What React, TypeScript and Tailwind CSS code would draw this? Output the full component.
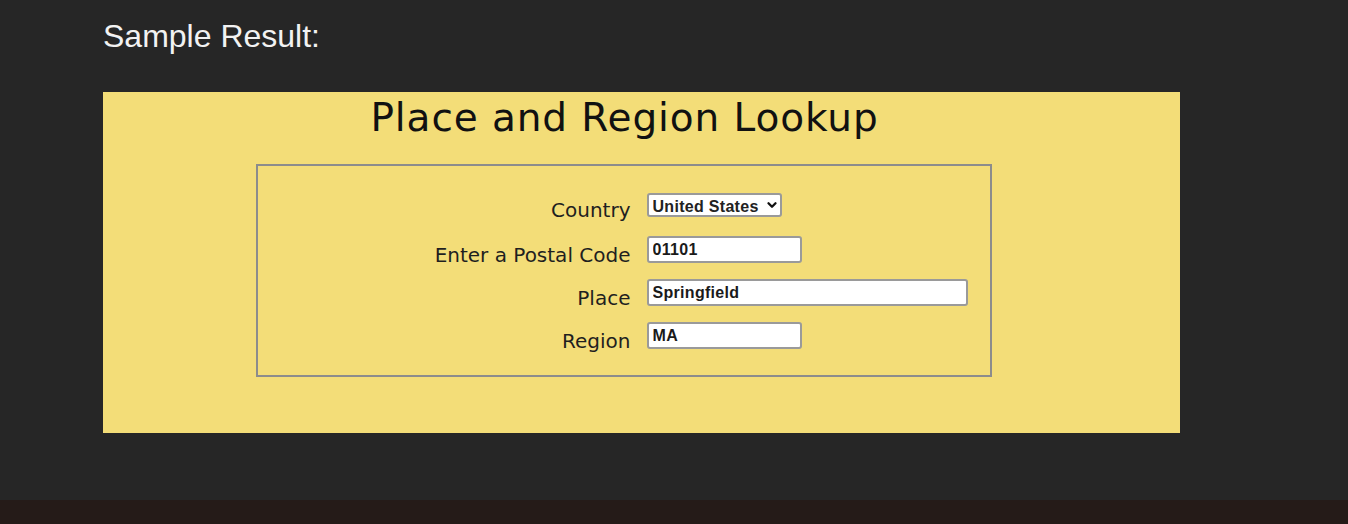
import { ChevronDown } from "lucide-react";

const labelFont = { fontFamily: '"DejaVu Sans", Verdana, sans-serif' };
const fieldFont = { fontFamily: '"Liberation Sans", Arial, sans-serif' };

function Row({
  label,
  children,
  className = "",
}: {
  label: string;
  children: React.ReactNode;
  className?: string;
}) {
  return (
    <div className={`flex items-end ${className}`}>
      <label
        className="w-[389px] shrink-0 pr-[16px] text-right text-[20px] leading-[20px] text-[#1f1f1f] mb-[-2px]"
        style={labelFont}
      >
        {label}
      </label>
      {children}
    </div>
  );
}

function TextBox({ value, width }: { value: string; width: string }) {
  return (
    <input
      readOnly
      value={value}
      className={`${width} h-[27px] rounded-[3px] border-2 border-[#9a9a9a] bg-white px-[4px] text-[16px] font-bold tracking-[0.3px] text-[#1a1a1a] outline-none`}
      style={fieldFont}
    />
  );
}

export default function App() {
  return (
    <div className="min-h-[524px] bg-[#262626] flex flex-col">
      <div className="pl-[103px] pt-[20px]">
        <h2
          className="text-[32px] leading-[32px] text-[#f2f2f2]"
          style={fieldFont}
        >
          Sample Result:
        </h2>

        <div className="mt-[40px] w-[1077px] h-[341px] bg-[#f3dd78] pr-[34px] flex flex-col items-center pt-[7px]">
          <h1
            className="text-[39px] leading-[38px] text-[#111] tracking-[0.9px]"
            style={labelFont}
          >
            Place and Region Lookup
          </h1>

          <div className="mt-[27px] w-[736px] h-[213px] border-2 border-[#8c8c8c] pt-[27px] -ml-[2px]">
            <Row label="Country">
              <div className="relative">
                <select
                  className="w-[135px] h-[24px] appearance-none rounded-[3px] border-2 border-[#9a9a9a] bg-white pl-[4px] text-[16px] font-bold tracking-[0.3px] text-[#222] outline-none"
                  style={fieldFont}
                  defaultValue="us"
                >
                  <option value="us">United States</option>
                </select>
                <ChevronDown
                  className="absolute right-[3px] top-[5px] h-[14px] w-[14px] text-[#111] pointer-events-none"
                  strokeWidth={4}
                />
              </div>
            </Row>
            <Row label="Enter a Postal Code" className="mt-[18px]">
              <TextBox value="01101" width="w-[155px]" />
            </Row>
            <Row label="Place" className="mt-[16px]">
              <TextBox value="Springfield" width="w-[321px]" />
            </Row>
            <Row label="Region" className="mt-[16px]">
              <TextBox value="MA" width="w-[155px]" />
            </Row>
          </div>
        </div>
      </div>

      <div className="mt-[67px] h-[24px] bg-[#251b18]" />
    </div>
  );
}
